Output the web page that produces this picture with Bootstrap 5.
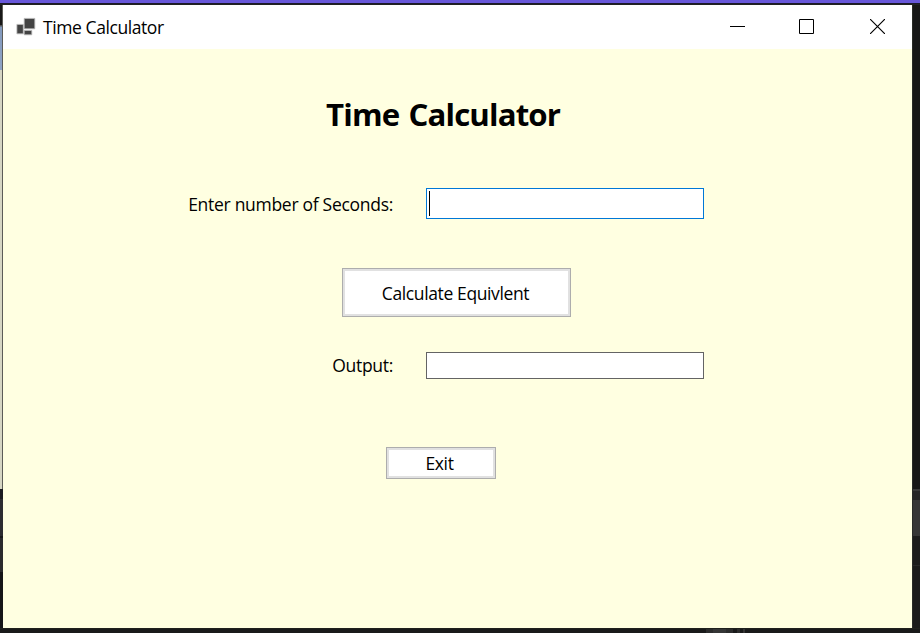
<!DOCTYPE html>
<html lang="en">
<head>
<meta charset="utf-8">
<title>Time Calculator</title>
<link href="https://cdn.jsdelivr.net/npm/bootstrap@5.3.0/dist/css/bootstrap.min.css" rel="stylesheet">
<style>
body{width:920px;height:633px;background:#1a1a1a;font-family:"Open Sans","Noto Sans",sans-serif;font-size:17.5px;line-height:24px;color:#000}
.top-strip{height:5px;background:linear-gradient(#6857d9 0 3px,#1c1a2a 3px 4px,#222 4px)}
.edge-left{width:3px;background:linear-gradient(90deg,transparent 2px,#5c5c58 2px) 0 0/3px 484px no-repeat,linear-gradient(#181818 0 20px,#555 20px 21px,#8299bd 22px,#90a4c4 65px,#d6d6c4 65px 484px,#1b1b20 484px 494px,#2c2c30 494px 531px,#19191c 531px 533px,#2a2a2d 533px 567px,#151518 567px)}
.edge-right{width:8px;background:linear-gradient(90deg,#292b27 1px,transparent 1px),linear-gradient(#171717 0 484px,#3a3a3a 484px 486px,#262626 486px 495px,#363636 495px 531px,#1c1c1c 531px 560px,#292929 560px 561px,#1b1b1b 561px)}
.edge-bottom{height:5px;background:linear-gradient(#20211d 1px,transparent 1px),linear-gradient(90deg,#191a1a 706px,#2b2c2c 706px 713px,#353636 713px 726px,#2b2c2c 726px 733px,#191a1a 733px 737px,#2b2c2c 737px 740px,#191a1a 740px 743px,#333 743px 745px,#191a1a 745px)}
.app-title{height:44px}
.app-icon{margin:0 0 1px 13px}
.caption-text{margin-left:7px;letter-spacing:-.42px}
.caption-btns{gap:54px;padding-right:27px;padding-bottom:1px}
.caption-close{margin-left:2px}
.client{background:#ffffe1}
.heading{font-size:31.2px;line-height:40px;font-weight:700;margin:45px 0 0 323px;letter-spacing:-.85px;word-spacing:2px}
.field-label{width:390px;text-align:right;letter-spacing:-.29px}
.field-box{width:278px;border:1px solid #646464;margin-left:33px;border-radius:0;padding:0 2px}
.row-seconds{margin-top:54px;height:31px}
.row-output{margin-top:35px;height:27px}
.row-output .field-label{padding-bottom:2px}
.box-active{border-color:#0078d7}
.caret{width:1px;height:25px;background:#000}
.push{background:#fff;border:1px solid #adadad;box-shadow:inset 0 0 0 2px #e1e1e1;border-radius:0;color:#000;padding:0;font-size:inherit;line-height:24px;letter-spacing:-.38px}
.push-calc{width:229px;height:49px;margin:49px 0 0 339px;padding:0 2px 0 0}
.push-exit{width:110px;height:32px;margin:68px 0 0 383px;padding:0 3px 1px 0}
</style>
<script src="https://cdn.jsdelivr.net/npm/bootstrap@5.3.0/dist/js/bootstrap.bundle.min.js"></script>
</head>
<body class="d-flex flex-column overflow-hidden m-0">
<div class="top-strip flex-shrink-0"></div>
<div class="d-flex flex-grow-1">
  <div class="edge-left"></div>
  <main class="d-flex flex-column flex-grow-1">
    <header class="app-title bg-white d-flex align-items-center justify-content-between">
      <div class="d-flex align-items-center">
        <svg class="app-icon" width="20" height="20" viewBox="0 0 20 20"><g fill="#444" stroke="#bbb" stroke-width=".8"><path d="M.9 7.4h6.4v9.4H.9zM8.2 1.4h10.6v10.4H8.2zM8.2 13.5h7.6v4.3H8.2z"/></g></svg>
        <span class="caption-text">Time Calculator</span>
      </div>
      <div class="caption-btns d-flex align-items-center">
        <svg width="15" height="15"><path d="M0 7.5h15" stroke="#000"/></svg>
        <svg width="15" height="15"><path d="M.5.5h14v14H.5z" fill="none" stroke="#000"/></svg>
        <svg class="caption-close" width="15" height="15"><path d="M0 0l15 15M15 0L0 15" stroke="#000" stroke-width="1.15"/></svg>
      </div>
    </header>
    <section class="client flex-grow-1 d-flex flex-column align-items-start">
      <h1 class="heading text-nowrap">Time Calculator</h1>
      <div class="row-seconds d-flex align-items-center">
        <label class="field-label text-nowrap">Enter number of Seconds:</label>
        <div class="field-box box-active bg-white h-100 d-flex align-items-center"><div class="caret"></div></div>
      </div>
      <button class="btn push push-calc" type="button">Calculate Equivlent</button>
      <div class="row-output d-flex align-items-center">
        <label class="field-label text-nowrap">Output:</label>
        <div class="field-box bg-white h-100"></div>
      </div>
      <button class="btn push push-exit" type="button">Exit</button>
    </section>
  </main>
  <div class="edge-right"></div>
</div>
<div class="edge-bottom flex-shrink-0"></div>
</body>
</html>
